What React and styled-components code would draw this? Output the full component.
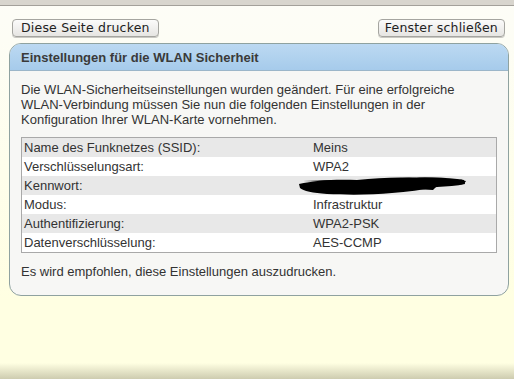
import React from "react";
import styled, { createGlobalStyle } from "styled-components";

const Global = createGlobalStyle`
  html, body { margin: 0; padding: 0; }
  body {
    width: 514px;
    height: 379px;
    overflow: hidden;
    background: #ffffe2;
    font-family: "Liberation Sans", Arial, sans-serif;
  }
`;

const Page = styled.div`
  position: relative;
  width: 514px;
  height: 379px;
  display: flex;
  flex-direction: column;
  background: linear-gradient(to bottom, #fdfdf7 0px, #fdfdf5 40px, #ffffe2 300px);
  &::after {
    content: "";
    position: absolute;
    left: 0; right: 0; bottom: 0;
    height: 16px;
    background: linear-gradient(to bottom, rgba(200,198,170,0), rgba(200,198,170,0.9));
    pointer-events: none;
  }
`;

const TopBar = styled.div`
  height: 5px;
  background: #d8d5ce;
  border-bottom: 1px solid #a3a09a;
`;

const Toolbar = styled.div`
  display: flex;
  justify-content: space-between;
  padding: 13px 9px 0 12px;
`;

const Button = styled.button`
  font-family: "DejaVu Sans", sans-serif;
  font-size: 12.5px;
  color: #222;
  height: 18px;
  padding: 0 ${(p) => p.$pad || 8}px;
  border: 1px solid #a5a5a0;
  border-radius: 4px;
  background: linear-gradient(to bottom, #fbfbfa, #e6e5e2);
  box-shadow: 0 1px 0 #c9c8c3;
  line-height: 16px;
  letter-spacing: 0.2px;
`;

const Panel = styled.section`
  margin: 6px 5px 0 9px;
  border: 1px solid #8fa2a0;
  border-radius: 12px;
  background: #f7f7f5;
  overflow: hidden;
`;

const Header = styled.h1`
  margin: 0;
  height: 26px;
  padding: 0 11px;
  display: flex;
  align-items: center;
  background: linear-gradient(to bottom, #bcd9f2, #a6cbeb);
  border-bottom: 1px solid #9cb6c9;
  font-size: 13px;
  font-weight: bold;
  color: #3a3a3a;
`;

const Body = styled.div`
  padding: 11px 11px 16px 11px;
  font-size: 13px;
  color: #333;
  line-height: 15px;
`;

const Intro = styled.p`
  margin: 0 0 10px 0;
  white-space: nowrap;
`;

const Table = styled.div`
  border: 1px solid #a9a9a9;
  display: flex;
  flex-direction: column;
`;

const Row = styled.div`
  display: grid;
  grid-template-columns: 289px 1fr;
  height: 19px;
  align-items: center;
  background: ${(p) => (p.$odd ? "#e8e8e8" : "#ffffff")};
  padding-left: 2px;
`;

const Cell = styled.div`
  position: relative;
  height: 19px;
  line-height: 19px;
  white-space: nowrap;
`;

const Redacted = styled.svg`
  position: absolute;
  left: -16px;
  top: 0;
`;

const Footer = styled.p`
  margin: 11px 0 0 0;
`;

const rows = [
  ["Name des Funknetzes (SSID):", "Meins"],
  ["Verschlüsselungsart:", "WPA2"],
  ["Kennwort:", null],
  ["Modus:", "Infrastruktur"],
  ["Authentifizierung:", "WPA2-PSK"],
  ["Datenverschlüsselung:", "AES-CCMP"],
];

function Scribble() {
  return (
    <Redacted width="170" height="20" viewBox="0 0 170 20">
      <path
        d="M2 8 C18 4 40 3 60 4 C80 2 100 1 120 2 C140 1 155 2 167 4 L168 8 C160 10 150 10 140 11 C125 14 110 16 95 17 C75 19 50 19 30 18 C16 17 6 15 3 12 Z"
        fill="#000"
      />
      <path d="M6 5 L40 4 L38 6 Z M105 1 L150 2 L140 3 Z M158 3 L169 5 L167 8 Z" fill="#000" />
      <circle cx="164" cy="6" r="2.5" fill="#000" />
      <path d="M115 11 L140 10 L136 14 L118 13 Z" fill="#000" />
    </Redacted>
  );
}

export default function App() {
  return (
    <>
      <Global />
      <Page>
        <TopBar />
        <Toolbar>
          <Button>Diese Seite drucken</Button>
          <Button $pad={6}>Fenster schließen</Button>
        </Toolbar>
        <Panel>
          <Header>Einstellungen für die WLAN Sicherheit</Header>
          <Body>
            <Intro>
              Die WLAN-Sicherheitseinstellungen wurden geändert. Für eine erfolgreiche
              <br />
              WLAN-Verbindung müssen Sie nun die folgenden Einstellungen in der
              <br />
              Konfiguration Ihrer WLAN-Karte vornehmen.
            </Intro>
            <Table>
              {rows.map(([label, value], i) => (
                <Row key={label} $odd={i % 2 === 0}>
                  <Cell>{label}</Cell>
                  <Cell>{value === null ? <Scribble /> : value}</Cell>
                </Row>
              ))}
            </Table>
            <Footer>Es wird empfohlen, diese Einstellungen auszudrucken.</Footer>
          </Body>
        </Panel>
      </Page>
    </>
  );
}
